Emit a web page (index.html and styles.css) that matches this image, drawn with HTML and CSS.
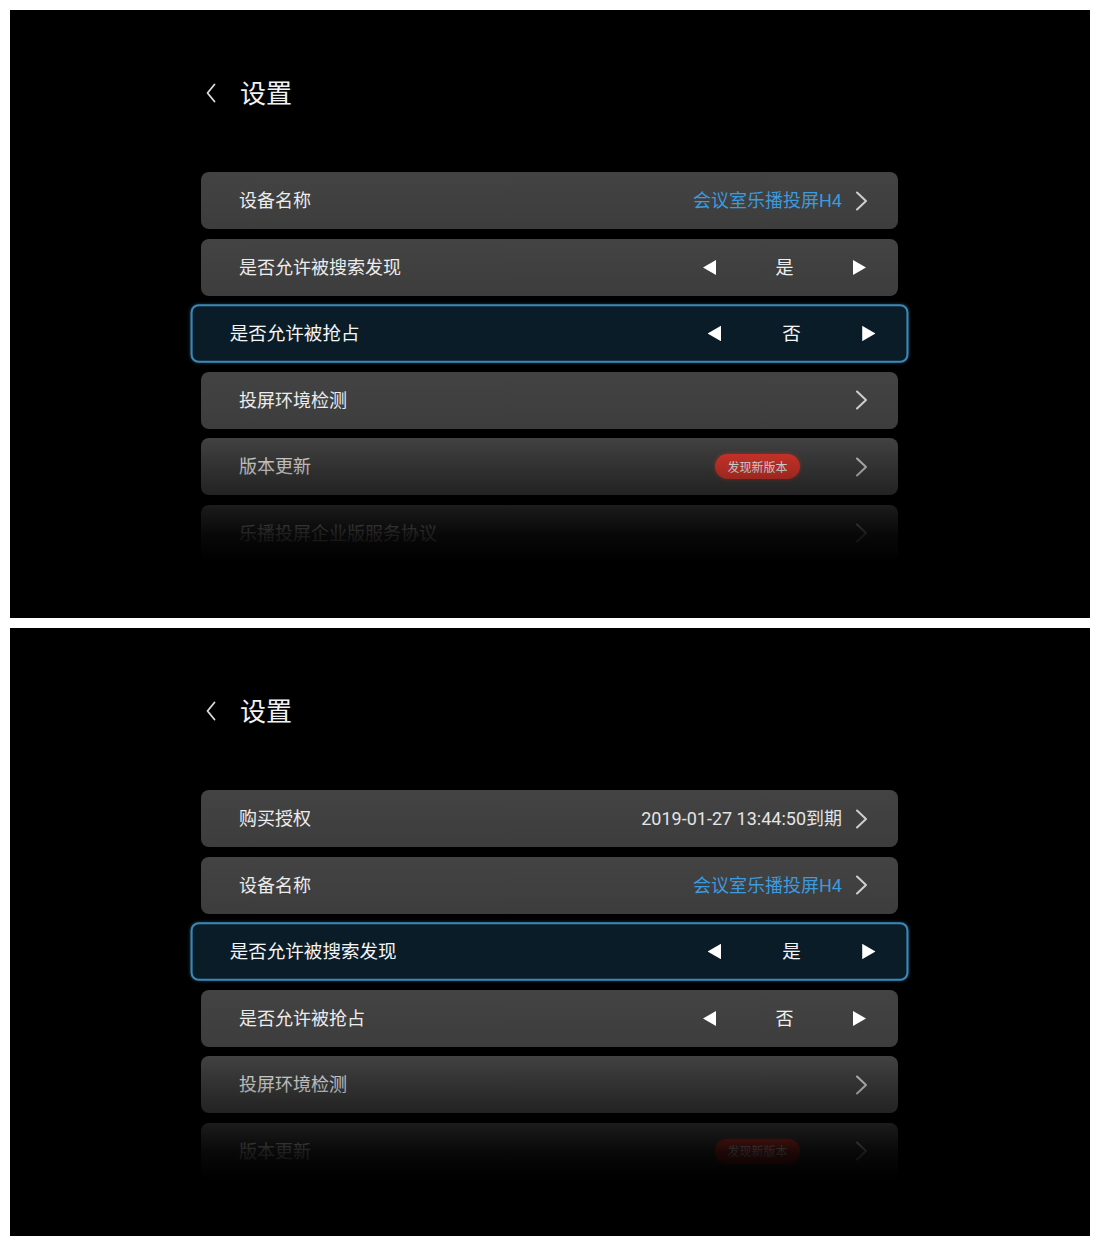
FILE: index.html
```html
<!DOCTYPE html>
<html lang="zh-CN">
<head>
<meta charset="utf-8">
<title>设置</title>
<link rel="stylesheet" href="styles.css">
</head>
<body>
<div class="screens">
  <section class="panel">
    <header class="header">
      <svg class="back" viewBox="0 0 10 20" width="10" height="20"><path d="M8.5 1.5 L1.5 10 L8.5 18.5" /></svg>
      <h1 class="title">设置</h1>
    </header>
    <div class="list">
      <div class="row">
        <span class="label">设备名称</span>
        <span class="value blue">会议室乐播投屏H4</span>
        <svg class="chev" viewBox="0 0 13 20" width="13" height="20"><path d="M2 1.5 L11 10 L2 18.5" /></svg>
      </div>
      <div class="row">
        <span class="label">是否允许被搜索发现</span>
        <div class="stepper">
          <svg class="tri" viewBox="0 0 13 15" width="13" height="15"><polygon points="13,0 13,15 0,7.5" /></svg>
          <span class="step-val">是</span>
          <svg class="tri" viewBox="0 0 13 15" width="13" height="15"><polygon points="0,0 0,15 13,7.5" /></svg>
        </div>
      </div>
      <div class="row focused">
        <span class="label">是否允许被抢占</span>
        <div class="stepper">
          <svg class="tri" viewBox="0 0 13 15" width="13" height="15"><polygon points="13,0 13,15 0,7.5" /></svg>
          <span class="step-val">否</span>
          <svg class="tri" viewBox="0 0 13 15" width="13" height="15"><polygon points="0,0 0,15 13,7.5" /></svg>
        </div>
      </div>
      <div class="row">
        <span class="label">投屏环境检测</span>
        <svg class="chev" viewBox="0 0 13 20" width="13" height="20"><path d="M2 1.5 L11 10 L2 18.5" /></svg>
      </div>
      <div class="row">
        <span class="label">版本更新</span>
        <span class="badge">发现新版本</span>
        <svg class="chev" viewBox="0 0 13 20" width="13" height="20"><path d="M2 1.5 L11 10 L2 18.5" /></svg>
      </div>
      <div class="row">
        <span class="label">乐播投屏企业版服务协议</span>
        <svg class="chev" viewBox="0 0 13 20" width="13" height="20"><path d="M2 1.5 L11 10 L2 18.5" /></svg>
      </div>
    </div>
    <div class="fade"></div>
  </section>

  <section class="panel">
    <header class="header">
      <svg class="back" viewBox="0 0 10 20" width="10" height="20"><path d="M8.5 1.5 L1.5 10 L8.5 18.5" /></svg>
      <h1 class="title">设置</h1>
    </header>
    <div class="list">
      <div class="row">
        <span class="label">购买授权</span>
        <span class="value">2019-01-27 13:44:50到期</span>
        <svg class="chev" viewBox="0 0 13 20" width="13" height="20"><path d="M2 1.5 L11 10 L2 18.5" /></svg>
      </div>
      <div class="row">
        <span class="label">设备名称</span>
        <span class="value blue">会议室乐播投屏H4</span>
        <svg class="chev" viewBox="0 0 13 20" width="13" height="20"><path d="M2 1.5 L11 10 L2 18.5" /></svg>
      </div>
      <div class="row focused">
        <span class="label">是否允许被搜索发现</span>
        <div class="stepper">
          <svg class="tri" viewBox="0 0 13 15" width="13" height="15"><polygon points="13,0 13,15 0,7.5" /></svg>
          <span class="step-val">是</span>
          <svg class="tri" viewBox="0 0 13 15" width="13" height="15"><polygon points="0,0 0,15 13,7.5" /></svg>
        </div>
      </div>
      <div class="row">
        <span class="label">是否允许被抢占</span>
        <div class="stepper">
          <svg class="tri" viewBox="0 0 13 15" width="13" height="15"><polygon points="13,0 13,15 0,7.5" /></svg>
          <span class="step-val">否</span>
          <svg class="tri" viewBox="0 0 13 15" width="13" height="15"><polygon points="0,0 0,15 13,7.5" /></svg>
        </div>
      </div>
      <div class="row">
        <span class="label">投屏环境检测</span>
        <svg class="chev" viewBox="0 0 13 20" width="13" height="20"><path d="M2 1.5 L11 10 L2 18.5" /></svg>
      </div>
      <div class="row">
        <span class="label">版本更新</span>
        <span class="badge">发现新版本</span>
        <svg class="chev" viewBox="0 0 13 20" width="13" height="20"><path d="M2 1.5 L11 10 L2 18.5" /></svg>
      </div>
    </div>
    <div class="fade"></div>
  </section>
</div>
</body>
</html>
```
FILE: styles.css
```css
* { box-sizing: border-box; }

html, body {
  margin: 0;
  padding: 0;
  background: #ffffff;
}

body {
  font-family: Roboto, "Noto Sans CJK SC", "Noto Sans", sans-serif;
  color: #e6e6e6;
}

.screens {
  display: flex;
  flex-direction: column;
  gap: 10px;
  padding: 10px;
}

.panel {
  position: relative;
  width: 1080px;
  height: 608px;
  background: #000;
  overflow: hidden;
}

.header {
  display: flex;
  align-items: center;
  height: 40px;
  margin-top: 63px;
  padding-left: 196px;
}

.back {
  display: block;
  fill: none;
  stroke: #dcdcdc;
  stroke-width: 1.8;
  stroke-linecap: round;
  stroke-linejoin: round;
}

.title {
  margin: 0 0 3px 24px;
  font-family: "Noto Sans CJK SC", sans-serif;
  font-size: 26px;
  font-weight: 400;
  line-height: 40px;
  color: #f2f2f2;
}

.list {
  display: flex;
  flex-direction: column;
  gap: 9.6px;
  margin-top: 59px;
  margin-left: 191px;
  width: 697px;
}

.row {
  display: flex;
  align-items: center;
  height: 57px;
  flex: none;
  padding: 0 30px 0 38px;
  border-radius: 8px;
  background: linear-gradient(#434343, #3d3d3d);
  font-size: 18px;
}

.label {
  flex: 1;
  color: #ececec;
  white-space: nowrap;
  margin-bottom: 3px;
}

.value {
  color: #e4e4e4;
  white-space: nowrap;
  margin-bottom: 3px;
}

.value.blue {
  color: #3c9ade;
}

.chev {
  display: block;
  margin-left: 13px;
  fill: none;
  stroke: #cfcfcf;
  stroke-width: 2;
  stroke-linecap: round;
  stroke-linejoin: round;
}

.stepper {
  display: flex;
  align-items: center;
  margin-right: 2px;
}

.tri {
  display: block;
  fill: #ffffff;
}

.step-val {
  width: 137px;
  text-align: center;
  color: #f0f0f0;
  margin-bottom: 3px;
}

.badge {
  display: flex;
  align-items: center;
  justify-content: center;
  width: 85px;
  height: 25px;
  margin-right: 42px;
  border-radius: 13px;
  background: #e2392e;
  box-shadow: 0 0 4px rgba(230, 60, 50, 0.55);
  color: #fff;
  font-size: 12px;
  font-family: "Noto Sans CJK SC", sans-serif;
  line-height: 1;
}

.focused {
  transform: scale(1.03);
  background: #0b1c29;
  border: 2px solid #3b88b6;
  box-shadow: 0 0 3px rgba(60, 140, 190, 0.45);
  padding-left: 36px;
  padding-right: 28px;
}

.focused .label,
.focused .step-val {
  color: #f4f4f4;
}

.fade {
  position: absolute;
  inset: 0;
  pointer-events: none;
  background: linear-gradient(
    to bottom,
    rgba(0, 0, 0, 0) 0px,
    rgba(0, 0, 0, 0) 425px,
    rgba(0, 0, 0, 0.42) 483px,
    rgba(0, 0, 0, 0.64) 500px,
    rgba(0, 0, 0, 0.88) 525px,
    rgba(0, 0, 0, 1) 552px
  );
}
```
